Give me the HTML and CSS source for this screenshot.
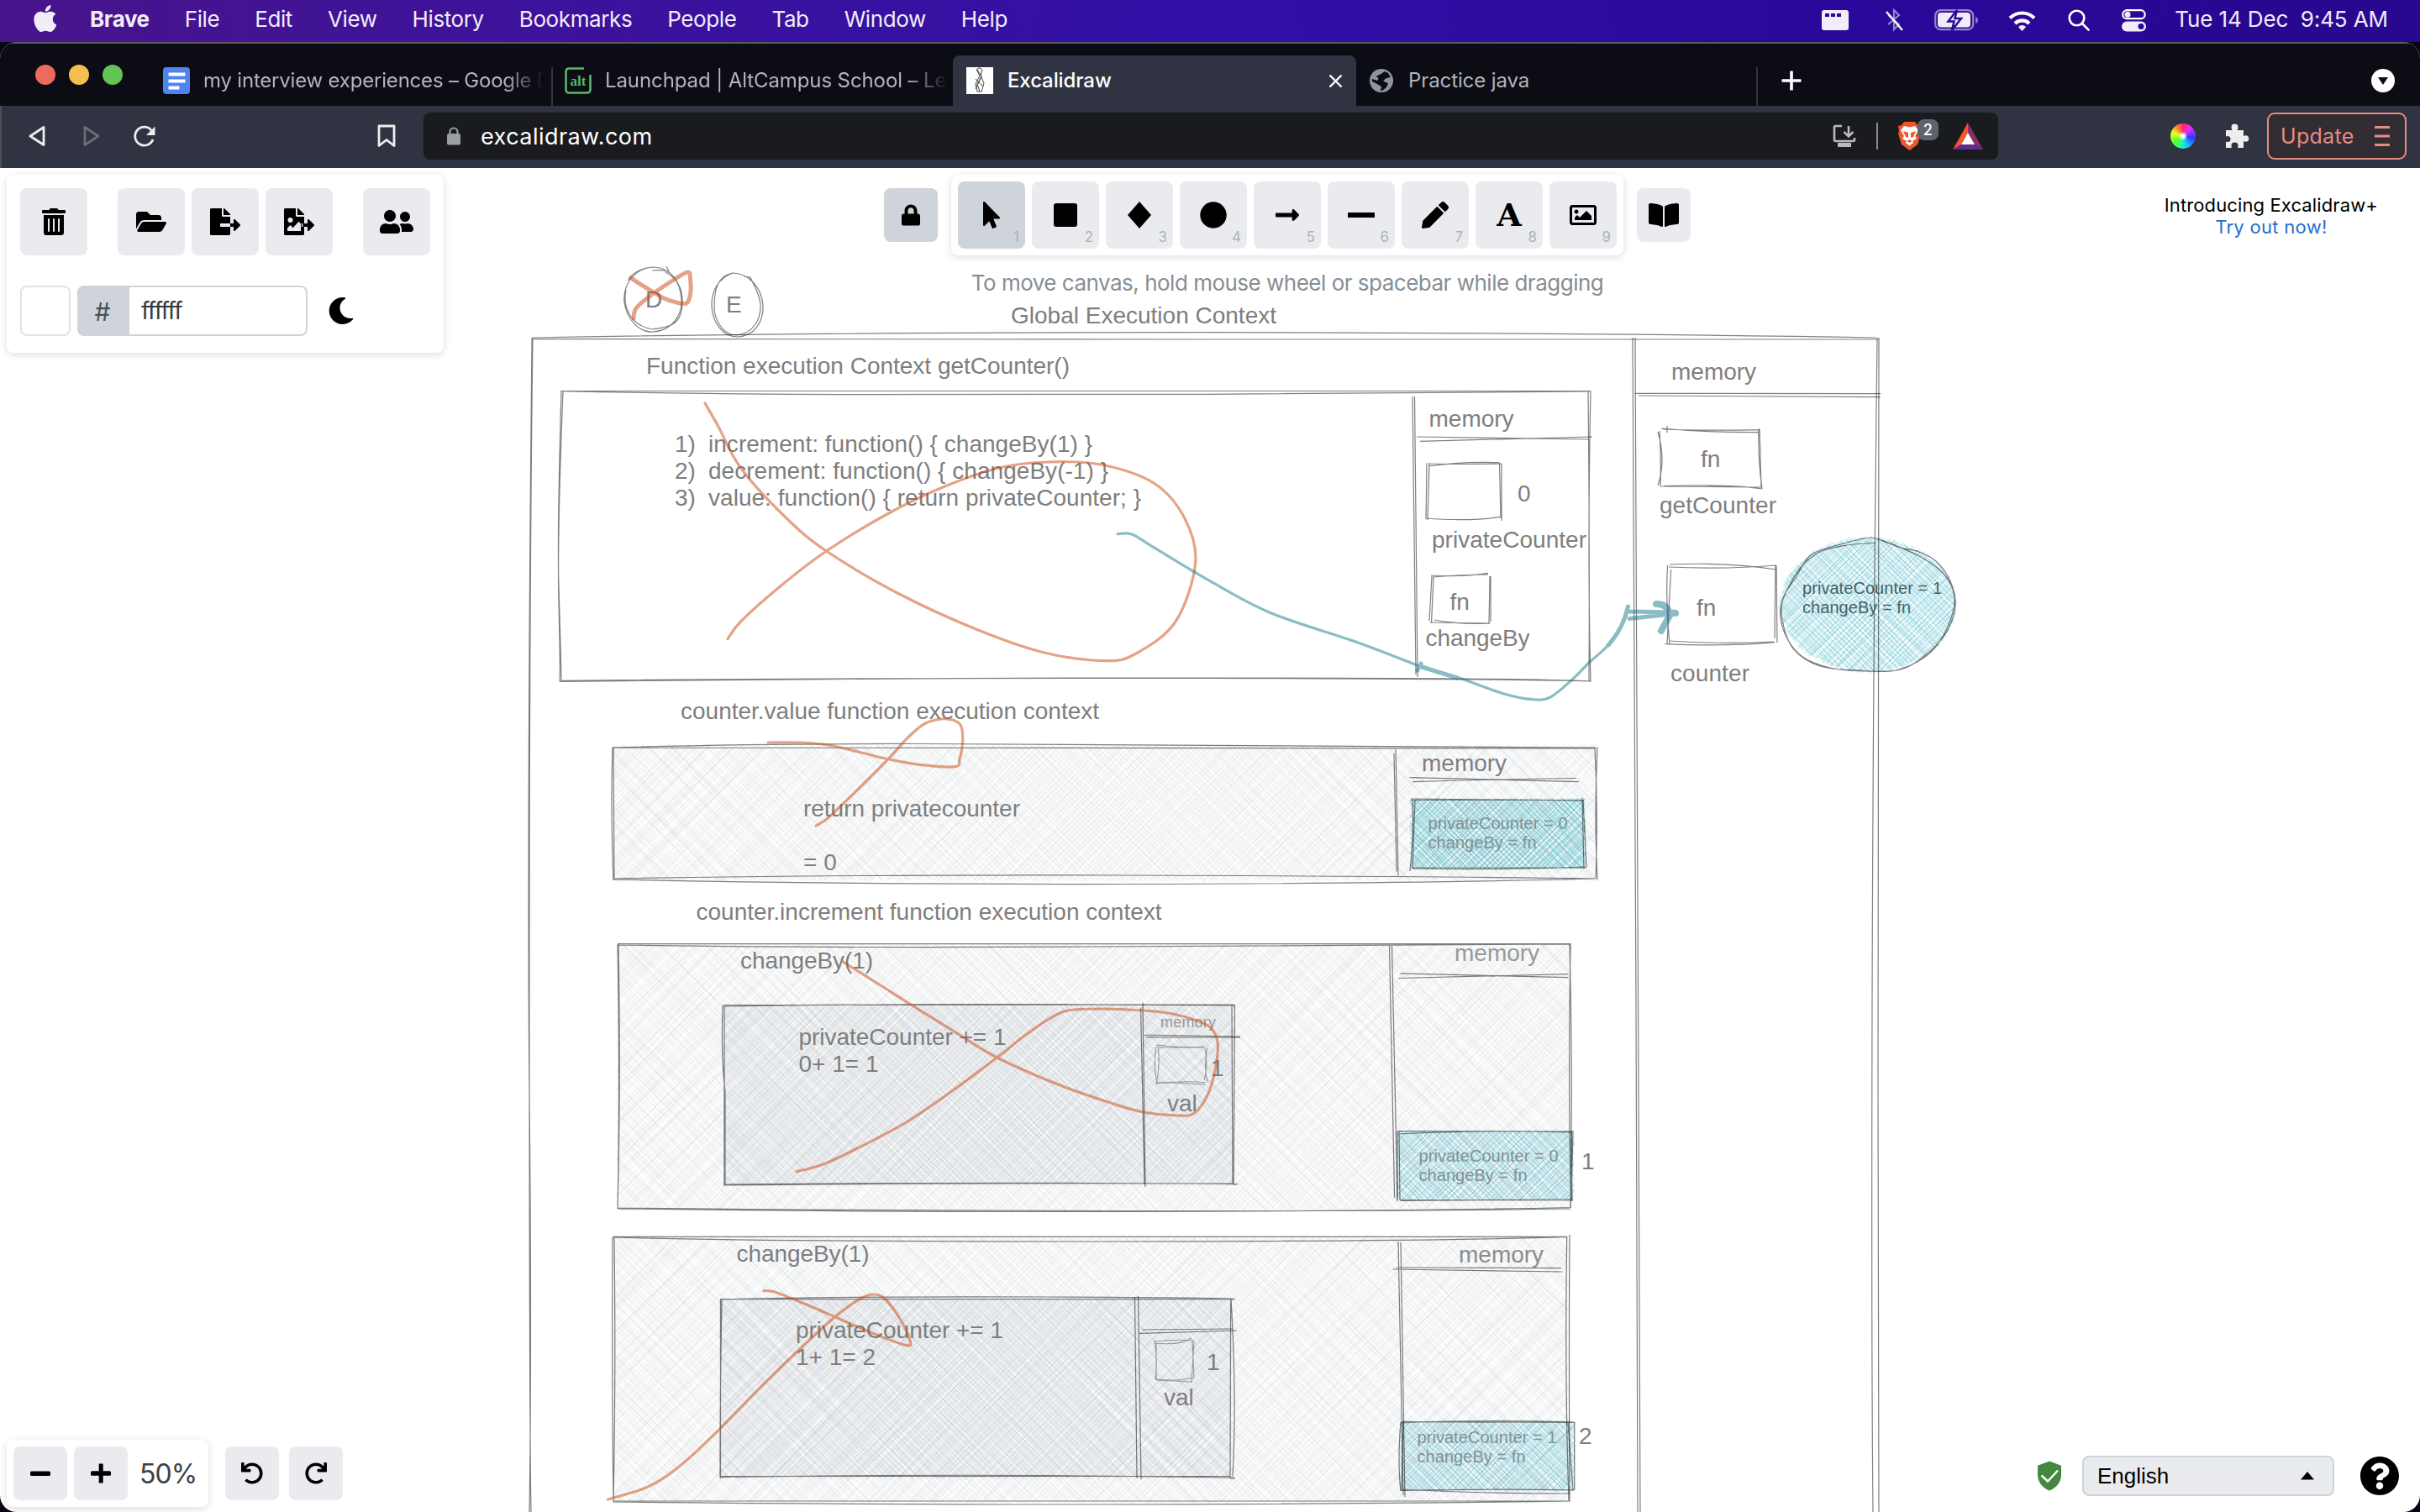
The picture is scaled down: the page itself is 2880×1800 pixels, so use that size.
FILE: index.html
```html
<!DOCTYPE html>
<html lang="en">
<head>
<meta charset="utf-8">
<title>Excalidraw</title>
<link rel="stylesheet" href="styles.css">
</head>
<body>
<header class="menubar">
  <nav class="menus">
    <svg class="apple" viewBox="4 32 368 448" width="27" height="32"><path d="M318.7 268.7c-.2-36.7 16.4-64.4 50-84.8-18.8-26.9-47.2-41.7-84.7-44.6-35.5-2.8-74.3 20.7-88.5 20.7-15 0-49.4-19.7-76.4-19.7C63.3 141.2 4 184.8 4 273.5q0 39.3 14.4 81.2c12.8 36.7 59 126.7 107.2 125.2 25.2-.6 43-17.9 75.8-17.9 31.8 0 48.3 17.9 76.4 17.9 48.6-.7 90.4-82.5 102.6-119.3-65.2-30.7-61.7-90-61.7-91.9zm-56.6-164.2c27.3-32.4 24.8-61.9 24-72.5-24.1 1.4-52 16.4-67.9 34.9-17.5 19.8-27.8 44.3-25.6 71.9 26.1 2 49.9-11.4 69.5-34.3z"/></svg>
    <b>Brave</b><span>File</span><span>Edit</span><span>View</span><span>History</span><span>Bookmarks</span><span>People</span><span>Tab</span><span>Window</span><span>Help</span>
  </nav>
  <div class="status">
    <svg width="32" height="24" viewBox="0 0 32 24"><path fill-rule="evenodd" d="M3 0h26a3 3 0 0 1 3 3v18a3 3 0 0 1-3 3H3a3 3 0 0 1-3-3V3a3 3 0 0 1 3-3zm1 4v4h5V4zm7 0v4h5V4zm7 0v4h5V4z"/></svg>
    <svg class="bt" width="22" height="28" viewBox="0 0 22 28"><path d="M4 8l13 11-6 6V2l6 6L4 19" opacity=".5"/><path d="M2 4l19 22"/></svg>
    <svg class="battery" width="52" height="26" viewBox="0 0 52 26"><rect x="1.2" y="1.2" width="45" height="23" rx="6.500" fill="none" stroke="#fff" stroke-opacity=".5" stroke-width="2.200"/><path d="M49 9v8q3-1 3-4t-3-4z" opacity=".5"/><rect x="4" y="4" width="39" height="17.500" rx="4"/><path d="M27 1L16.500 14.500h7L21 25l11-14h-7.500z" stroke="#2a0b98" stroke-width="2.500"/></svg>
    <svg width="33" height="25" viewBox="0 0 33 25"><g fill="none" stroke="#fff" stroke-width="4.200"><path d="M2 9.500a20.500 20.500 0 0 1 29 0"/><path d="M8 16a12 12 0 0 1 17 0"/></g><path d="M16.500 25l-4.600-5a6.500 6.500 0 0 1 9.200 0z"/></svg>
    <svg width="26" height="26" viewBox="0 0 26 26"><g fill="none" stroke="#fff" stroke-width="2.600" stroke-linecap="round"><circle cx="10.500" cy="10.500" r="8.800"/><path d="M17 17l7.500 7.500"/></g></svg>
    <svg width="29" height="27" viewBox="0 0 29 27"><rect x="1.200" y="1.200" width="26.500" height="10" rx="5" fill="none" stroke="#fff" stroke-width="2.200"/><circle cx="7" cy="6.200" r="3.500"/><path fill-rule="evenodd" d="M6 14.500h17a6 6 0 0 1 0 12H6a6 6 0 0 1 0-12zm17 2.500a3.500 3.500 0 1 0 .01 7 3.500 3.500 0 0 0 0-7z"/></svg>
    <span class="clock">Tue 14 Dec&nbsp; 9:45 AM</span>
  </div>
</header>

<div class="window">
  <div class="tabs">
    <div class="lights"><i class="red"></i><i class="yellow"></i><i class="green"></i></div>
    <div class="tab tab-docs">
      <svg width="32" height="32" viewBox="0 0 32 32"><rect width="32" height="32" rx="4" fill="#4f84f0"/><path fill="#fff" d="M6.500 6.500h20v4h-20zm0 8h20v4h-20zm0 8h13v4h-13z"/></svg>
      <span class="title fade">my interview experiences – Google D</span>
    </div>
    <div class="tab tab-alt">
      <svg width="32" height="32" viewBox="0 0 32 32"><path d="M23 1.500H5A3.500 3.500 0 0 0 1.500 5v22A3.500 3.500 0 0 0 5 30.500h22a3.500 3.500 0 0 0 3.500-3.500V9" fill="none" stroke="#57b96b" stroke-width="2.600"/><text x="16" y="22" text-anchor="middle" font-family="Liberation Serif, serif" font-weight="bold" font-size="17" fill="#57b96b">alt</text></svg>
      <span class="title fade">Launchpad | AltCampus School – Lea</span>
    </div>
    <div class="tab tab-active">
      <svg width="32" height="32" viewBox="0 0 32 32"><rect width="32" height="32" fill="#fff"/><path d="M12 3q4-4 7 0l-2 7 4 9-3 10h-5l-2-9 5-10zM13 3l5 8-5 9 3 9M11 14l9 9M18 11l-7 15" fill="none" stroke="#444" stroke-width="1"/></svg>
      <span class="title">Excalidraw</span>
      <svg class="close" width="17" height="17" viewBox="0 0 17 17"><path d="M1.500 1.500l14 14M15.500 1.500l-14 14"/></svg>
    </div>
    <div class="tab tab-java">
      <svg width="28" height="28" viewBox="0 0 28 28"><circle cx="14" cy="14" r="14" fill="#90949c"/><path fill="#0b0c14" d="M18 3l4 2 3 5-5 1-4 3 3 2 3 1-2 5-5 4-2 0 1-5-5-3-6-3-.5-3 4 1 3 1 1-3-3-2 6-3z"/></svg>
      <span class="title">Practice java</span>
    </div>
    <svg class="newtab" width="26" height="26" viewBox="0 0 26 26"><path d="M13 1.500v23M1.500 13h23"/></svg>
    <svg class="tabsearch" width="28" height="28" viewBox="0 0 28 28"><circle cx="14" cy="14" r="14" fill="#fff"/><path d="M8 10h12l-6 9z" fill="#0b0c14"/></svg>
  </div>

  <div class="toolbar">
    <div class="nav">
      <svg width="20" height="26" viewBox="0 0 20 26"><path d="M18 2.500v21L2 13z"/></svg>
      <svg class="dim" width="20" height="26" viewBox="0 0 20 26"><path d="M2 2.500v21L18 13z"/></svg>
      <svg width="28" height="27" viewBox="0 0 28 27"><path d="M24 17a11 11 0 1 1-1.500-10.500"/><path class="solid" d="M26.500 1.500V12H16z"/></svg>
      <svg class="mark" width="22" height="28" viewBox="0 0 22 28"><path d="M2 2h18v23.500L11 18.500 2 25.500z"/></svg>
    </div>
    <div class="url">
      <svg width="16" height="22" viewBox="0 0 16 22"><path d="M3.500 9V6a4.500 4.500 0 0 1 9 0v3" fill="none" stroke="#9a9da1" stroke-width="2.200"/><rect y="8" width="16" height="13.500" rx="2" fill="#9a9da1"/></svg>
      <span class="addr">excalidraw.com</span>
      <svg class="install" width="28" height="28" viewBox="0 0 28 28"><path d="M11 2H3.500A1.500 1.500 0 0 0 2 3.500v15A1.500 1.500 0 0 0 3.500 20h21a1.500 1.500 0 0 0 1.500-1.500V16M19 2v12m-5.500-5l5.500 5.500L24.500 9" fill="none" stroke="#b9babc" stroke-width="2.600"/><path d="M6 22h16v5H6z" fill="#b9babc"/></svg>
      <i class="sep"></i>
      <div class="shields">
        <svg width="29" height="36" viewBox="0 0 29 36"><path fill="#f0572a" d="M8 1h13l3 4 4 1-1 6 1 3-4 13-9.500 7L5 28 1 15l1-3-1-6 4-1z"/><path fill="#fff" d="M8 6l6.500 1.500L21 6l4 5-4 7 2 3-5 3 1 2-4.500 3.500L10 26l1-2-5-3 2-3-4-7z"/><path fill="#f0572a" d="M7 12l6 2v6l-3-1zM22 12l-6 2v6l3-1zM14.500 22l3 2-3 2-3-2z"/></svg>
        <b class="badge">2</b>
      </div>
      <svg width="36" height="32" viewBox="0 0 36 32"><path fill="#f5522f" d="M18 0v12L10 26l-10 6z"/><path fill="#8e2a64" d="M18 0l18 32-10-6-8-14z"/><path fill="#5c2e91" d="M0 32h36l-10-6H10z"/><path fill="#fff" d="M18 12l8 14H10z"/></svg>
    </div>
    <div class="ext">
      <div class="wheel"></div>
      <svg width="30" height="30" viewBox="0 0 30 30"><path fill="#eee" d="M2 8h7.500q-1-1.500-1-3.500a4 4 0 0 1 8 0Q16.500 6.500 15.500 8H23v7q1-.8 2.500-.8a3.700 3.700 0 0 1 0 7.600q-1.500 0-2.500-.8V29h-7q.5-1 .5-2.500a4 4 0 0 0-8 0Q8.500 28 9 29H2v-7.500q1 .5 2 .5a3.500 3.500 0 0 0 0-7q-1 0-2 .5z"/></svg>
      <div class="update">Update <svg width="20" height="26" viewBox="0 0 20 26"><path d="M1 2.500h18M1 13h18M1 23.500h18"/></svg></div>
    </div>
  </div>

  <main class="app">
    <svg class="canvas" viewBox="0 200 2880 1600" width="2880" height="1600">
      <!-- hachure fills, generated by canvas.js -->
      <g class="h-gray" data-box="730 888 1170 160"></g>
      <g class="h-gray" data-box="736 1124 1133 316"></g>
      <g class="h-gray" data-box="730 1472 1137 316"></g>
      <g class="h-dark" data-box="862 1197 606 213"></g>
      <g class="h-dark" data-box="857 1547 608 212"></g>
      <g class="h-teal strong" data-box="1680 952 206 81"></g>
      <g class="h-teal" data-box="1664 1347 208 81"></g>
      <g class="h-teal" data-box="1667 1693 206 81"></g>
      <g class="h-teal pale" data-round="2223 720 104 79"></g>

      <g class="ink">
        <!-- D and E -->
        <path d="M776 318c-22 2-35 22-33 42 3 20 17 36 34 35 22-1 35-19 34-38-1-22-13-39-34-39-14 1-24 6-30 16M776 322c10-1 18 0 21 3m-4-8l3 6M745 345c-5 24 9 44 32 47 20-3 34-5 35-30 1-20-8-32-20-38"/>
        <path d="M872 325c-17 6-26 22-25 40 1 20 14 36 31 36 20-1 31-18 30-38-2-22-18-38-36-38-18 3-22 20-22 40 0 18 12 34 27 34 18-2 29-17 28-37-1-12-8-22-12-32l-8-1"/>
        <!-- global frame -->
        <path d="M633 402Q1000 395.500 1440 395.700T2233 402M633 403.500L1440 404H2236M633 402Q627 1000 630 1300T630 1800M634 403Q630 700 630 1200T632 1800M2234 402Q2229 800 2228 1200T2229 1800M2236 402Q2235 900 2235 1300T2236 1800"/>
        <path d="M1943 402Q1946 900 1947 1200T1949 1800M1946 402Q1948 900 1950 1300T1952 1800M1945 468.300L2238 468.700M1950 471L2238 472.700"/>
        <!-- getCounter frame -->
        <path d="M667 465.500H1893M667 465.700Q830 469 1000 469.700T1440 469.300L1892 466M668 466Q663 640 665 700T668 811M670 466Q663 640 665 720T666 812M667 811.300Q1060 807 1440 807T1892 811M667 810.300Q1060 806.500 1440 807.500T1893 811M1893 465Q1889 660 1893 812M1890 466Q1892 640 1891 811"/>
        <path d="M1681 472L1685 803M1683.500 472L1687 806M1686 520L1890 523M1690 525.300L1895 520"/>
        <path d="M1700 555Q1740 549 1784 550.700M1701 552Q1740 553 1787 552M1698 551L1697 618M1701 551L1699 619M1784.500 551L1786 617M1787 552L1787 620M1696.500 617Q1750 621 1785 615.300"/>
        <path d="M1703 685Q1740 687 1771 682.300M1705 687Q1740 684 1771 684M1704 686L1701 739M1706 687L1703.500 742M1773 686L1772 743M1774 686L1774 740M1702 741L1773 742M1707 738Q1740 744 1772 742"/>
        <path d="M1977 510Q2030 515 2094 514.700M1979 511Q2030 513 2094 511.700M1984 507V515M1973 514Q1983 548 1973 578M1975 513Q1977 545 1976 579M2093 510Q2092 545 2097 582M2094 511L2096 581M1976 579L2095 580M1980 578.500Q2060 576 2097 582"/>
        <path d="M1987 672Q2055 669 2114 678M1986 675Q2055 678 2114 673M1984.500 673Q1982 720 1987 767M1988.600 678L1984 766M2113 673L2112 760M2114 673L2115 765M1981.600 766.700Q2055 770 2112 764.700M1986 763Q2050 767 2112 764"/>
        <path data-curve="2232,646 2198,649 2168,656 2146,672 2130,696 2119,724 2124,754 2144,781 2178,795 2220,799 2262,797 2290,781 2315,755 2327,722 2321,692 2304,668 2284,657 2262,652 2243,645 2226,640 2194,647 2156,660 2138,686 2122,712 2121,738 2134,772 2166,793 2212,798 2256,798 2296,778 2318,746 2326,712 2314,684 2284,662 2240,643"/>
        <!-- counter.value frame -->
        <path d="M728.600 890Q1300 890.500 1899 891M728.600 890Q900 885 1102 885.500T1899 890M729 890Q726.500 965 730 1048M730 889L731 1046M730 1046Q1000 1041 1340 1042T1898 1046M730 1047Q1000 1053 1340 1052.500T1898 1046M1901 889Q1897 968 1901 1047M1898 890Q1902 968 1899 1046"/>
        <path d="M1661 892L1664 1042.500M1659 897L1662 1037.500M1677.600 925.700Q1780 928 1879 930.600M1681 930.600Q1780 928 1876 926.500"/>
        <path d="M1679 951L1885 953M1678 952.500H1885M1681 951Q1683 990 1678 1037M1684 952L1681 1033M1883 950L1885 1034M1884 952L1888 1033M1681 1033H1887M1680 1034Q1780 1036 1886 1032"/>
        <!-- counter.increment frame -->
        <path d="M735 1123.700L1869 1123.700M735 1125Q1000 1129 1300 1127T1869 1124M735 1124Q738 1290 735 1439M736 1124Q739 1290 735 1438M735 1438.800Q1000 1443 1340 1442.400T1869 1437.500M735 1438Q1000 1441 1340 1441.500T1869 1439M1869 1123Q1866 1280 1869.400 1438M1868 1124Q1872 1280 1869 1437"/>
        <path d="M1653.500 1126L1659.600 1426M1656.500 1126L1663 1428M1666.500 1158.800L1866.500 1163.700M1664.500 1164.500L1866.500 1159.600"/>
        <path d="M1663 1346.500L1872 1347M1664 1350Q1760 1345 1871 1348M1663 1347V1430M1665 1347L1666 1429M1872 1346L1870 1430M1870 1347L1871 1430M1666 1428.600H1872M1667 1429.500Q1780 1428 1872 1428"/>
        <path d="M861 1196.500Q1100 1195 1469 1196M862 1198Q1100 1194 1469 1197M862 1196V1411M860 1197Q858 1260 863 1300V1410M861 1410Q1100 1408 1300 1408.500T1468 1410M861 1411Q1100 1408 1469 1409M1469.500 1196L1468 1411M1466 1196L1467 1410"/>
        <path d="M1360 1193.500L1363 1412.700M1357.600 1199.600L1362 1410M1360 1232L1476 1234M1363.700 1234.700L1476 1235"/>
        <path class="thin" d="M1376 1244Q1405 1248 1434 1246M1378 1247H1433M1376 1246Q1372 1268 1377 1290M1378 1244Q1381 1268 1376 1291M1434 1248Q1438 1270 1433 1286M1437 1247Q1432 1268 1437 1288M1376 1288L1434 1291M1376 1290Q1410 1286 1435 1289"/>
        <!-- second increment frame -->
        <path d="M729.400 1472.300H1865M729.400 1473Q900 1478 1300 1478T1865 1472.300M729 1473Q728 1640 730 1788M731 1473Q733 1640 730 1787M730 1787H1866M730 1788Q1000 1791 1300 1791T1867 1787M1864.700 1472Q1862 1640 1867 1787M1868 1470Q1867 1600 1868 1788"/>
        <path d="M1664 1478L1670 1780M1667 1479L1672 1782M1661.600 1509L1858 1509.700M1657.600 1511L1859.400 1514"/>
        <path d="M1667 1694Q1760 1690 1873 1693M1668 1692.700L1874 1693.300M1667 1693Q1663 1740 1667 1775M1670 1693L1668 1774M1873.700 1693V1774M1866 1693L1872 1774M1666 1774.500Q1780 1772 1873 1774M1667 1773Q1760 1778 1869 1778"/>
        <path d="M857.500 1546.700H1465M857.500 1547Q1000 1543 1250 1544T1465 1547M857.500 1546V1760M859 1547Q857 1650 857 1759M857 1758.500Q1100 1755 1300 1757T1464 1760M857 1757.500H1464M1464.700 1546L1464 1760M1465 1546Q1472 1660 1467 1758"/>
        <path d="M1350.500 1544L1353 1759M1354.500 1543L1358 1761M1359 1583L1467 1582M1356 1587.300L1472 1584"/>
        <path class="thin" d="M1374 1597Q1400 1594 1421 1596M1373 1599Q1405 1602 1418 1593M1374 1596Q1378 1620 1375 1643M1376 1599V1642M1419 1596L1421 1640M1421 1597L1418 1646M1375 1642Q1400 1645 1421 1640M1376 1643L1419 1645"/>
      </g>

      <g class="label">
        <text x="768" y="366" textLength="20">D</text>
        <text x="864" y="372">E</text>
        <text x="1203" y="385" textLength="316">Global Execution Context</text>
        <text x="769" y="445" textLength="504">Function execution Context getCounter()</text>
        <text x="803" y="538">1)</text><text x="843" y="538" textLength="457">increment: function() { changeBy(1) }</text>
        <text x="803" y="570">2)</text><text x="843" y="570" textLength="476">decrement: function() { changeBy(-1) }</text>
        <text x="803" y="602">3)</text><text x="843" y="602" textLength="515">value: function() { return privateCounter; }</text>
        <text x="810" y="856" textLength="498">counter.value function execution context</text>
        <text x="1989" y="452">memory</text>
        <text x="1700.500" y="508">memory</text>
        <text x="1806" y="597">0</text>
        <text x="1704" y="652" textLength="184">privateCounter</text>
        <text x="1725.500" y="726">fn</text>
        <text x="1696.500" y="769" textLength="124">changeBy</text>
        <text x="2024" y="556">fn</text>
        <text x="1975" y="611" textLength="139">getCounter</text>
        <text x="2019" y="733">fn</text>
        <text x="1988" y="811" textLength="94">counter</text>
        <text x="956" y="971.500" textLength="258">return privatecounter</text>
        <text x="956" y="1035.500">= 0</text>
        <text x="828.500" y="1095" textLength="554">counter.increment function execution context</text>
        <text x="881" y="1152.700" textLength="158">changeBy(1)</text>
        <text x="950.500" y="1243.500" textLength="247">privateCounter += 1</text>
        <text x="950.500" y="1275.500" textLength="95">0+ 1= 1</text>
        <text x="1692" y="918">memory</text>
        <text class="light" x="1731" y="1144">memory</text>
        <text x="1441" y="1281">1</text>
        <text x="1389" y="1323">val</text>
        <text x="1882" y="1392">1</text>
        <text x="876.500" y="1501.700" textLength="158">changeBy(1)</text>
        <text x="947" y="1592.700" textLength="247">privateCounter += 1</text>
        <text x="947" y="1624.500" textLength="95">1+ 1= 2</text>
        <text x="1436" y="1630.700">1</text>
        <text x="1385" y="1672.700">val</text>
        <text class="light2" x="1736" y="1502.700">memory</text>
        <text x="1879" y="1718.500">2</text>
      </g>
      <g class="label small">
        <text class="deep" x="2145" y="706.700" textLength="166">privateCounter = 1</text>
        <text class="deep" x="2145" y="729.500" textLength="129">changeBy = fn</text>
        <text x="1699.500" y="987" textLength="166">privateCounter = 0</text>
        <text x="1699.500" y="1010" textLength="129">changeBy = fn</text>
        <text x="1688.500" y="1382.500" textLength="166">privateCounter = 0</text>
        <text x="1688.500" y="1405.500" textLength="129">changeBy = fn</text>
        <text x="1686.500" y="1718" textLength="166">privateCounter = 1</text>
        <text x="1686.500" y="1741" textLength="129">changeBy = fn</text>
        <text class="tiny" x="1381" y="1223" textLength="66">memory</text>
      </g>

      <g class="orange">
        <path class="bold" data-curve="751,331 768,342 790,355 805,360 817,361 821.6,350 821.6,333 818.6,324 802,333 774,352 757,367 754,379"/>
        <path data-curve="839,480 855,508 881.5,557 934,615 983.5,656 1070,707 1164,750 1242,776.7 1315,786.7 1352,778 1399,740 1422.7,670 1409.7,616.7 1373,575 1310,553 1247.5,550 1190,556.7 1122,580 1054,613 983.5,656 928.5,698 881.5,740 866,760.7"/>
        <path data-curve="914,884 954.5,884 986,887 1021.4,895 1057,903.7 1097,910.6 1137,912.7 1142,903.7 1145.5,885 1144,865 1135,857.6 1119.6,856 1099.6,862 1079.5,879 1057,903.7 1030,931 999,961 984,975 971,983"/>
        <path data-curve="1003.6,1145 1048,1173 1084,1196 1142,1232 1186.6,1259 1258,1290.6 1325,1314 1360.7,1324 1401,1328 1421.6,1325 1438,1301.6 1447,1269 1449,1240 1440,1223 1421.6,1214 1393,1206.5 1360.7,1203 1311.6,1201 1271,1203 1249,1212.7 1218,1234 1186.6,1259 1137.5,1295.5 1079.5,1335.5 1012.5,1371 977,1387 948,1394.7"/>
        <path data-curve="909,1536.7 921,1537.7 950,1549 993.7,1567.7 1035,1585.7 1079,1601.7 1082,1593 1071,1570 1053,1546 1039.6,1541 1024,1546 993.7,1567.7 955,1603 910,1646.7 856.6,1701 821,1735 794,1756.7 767,1771.7 723.6,1785"/>
      </g>
      <g class="teal">
        <path data-curve="1330,635.7 1347,636 1373,651.7 1440,691.7 1513,730 1616,765 1689,793"/>
        <path data-curve="1689,794 1733.4,806 1790,826 1824,832.7 1845,830 1870,810 1892,788 1911,771 1927,750 1937,723"/>
        <path class="bold" d="M1691 790L1687 798M1689 793L1734 807M1914 768Q1932 748 1937.500 722M1938 728L1992 729M1939 736.500L1980 732"/>
        <path class="head" d="M1971 719Q1984 719 1986 729L1994 730M1988 731Q1983 740 1977 751"/>
      </g>
    </svg>

    <div class="topbar">
      <section class="island panel">
        <div class="actions">
          <button class="btn"><svg viewBox="0 0 448 512" width="28" height="32"><path d="M32 464a48 48 0 0 0 48 48h288a48 48 0 0 0 48-48V128H32zm272-256a16 16 0 0 1 32 0v224a16 16 0 0 1-32 0zm-96 0a16 16 0 0 1 32 0v224a16 16 0 0 1-32 0zm-96 0a16 16 0 0 1 32 0v224a16 16 0 0 1-32 0zM432 32H312l-9.400-18.700A24 24 0 0 0 281.100 0H166.800a23.720 23.720 0 0 0-21.400 13.300L136 32H16A16 16 0 0 0 0 48v32a16 16 0 0 0 16 16h416a16 16 0 0 0 16-16V48a16 16 0 0 0-16-16z"/></svg></button>
          <div class="files">
            <button class="btn"><svg viewBox="0 0 576 512" width="36" height="32"><path d="M572.694 292.093L500.270 416.248A63.997 63.997 0 0 1 444.989 448H45.025c-18.523 0-30.064-20.093-20.731-36.093l72.424-124.155A64 64 0 0 1 152 256h399.964c18.523 0 30.064 20.093 20.730 36.093zM152 224h328v-48c0-26.510-21.490-48-48-48H272l-64-64H48C21.490 64 0 85.490 0 112v278.046l69.077-118.418C86.214 242.250 117.989 224 152 224z"/></svg></button>
            <button class="btn"><svg viewBox="0 0 576 512" width="36" height="32"><path d="M384 121.900c0-6.300-2.500-12.400-7-16.900L279.100 7c-4.500-4.500-10.600-7-17-7H256v128h128zM571 308l-95.700-96.400c-10.100-10.100-27.400-3-27.400 11.300V288h-64v64h64v65.200c0 14.300 17.300 21.400 27.400 11.300L571 332c6.600-6.600 6.600-17.400 0-24zm-379 28v-32c0-8.800 7.200-16 16-16h176V160H248c-13.200 0-24-10.800-24-24V0H24C10.700 0 0 10.700 0 24v464c0 13.300 10.700 24 24 24h336c13.300 0 24-10.700 24-24V352H208c-8.800 0-16-7.200-16-16z"/></svg></button>
            <button class="btn"><svg viewBox="0 0 576 512" width="36" height="32"><path fill-rule="evenodd" d="M384 121.900c0-6.300-2.500-12.400-7-16.900L279.100 7c-4.500-4.500-10.600-7-17-7H256v128h128zM571 308l-95.700-96.400c-10.100-10.100-27.400-3-27.400 11.300V288h-90v64h90v65.200c0 14.300 17.300 21.400 27.400 11.300L571 332c6.600-6.600 6.600-17.400 0-24zM384 288V160H248c-13.200 0-24-10.800-24-24V0H24C10.700 0 0 10.700 0 24v464c0 13.300 10.700 24 24 24h336c13.300 0 24-10.700 24-24V352h-50v-64zM120 176a48 48 0 1 1 0 96 48 48 0 0 1 0-96zM64 432v-56l56-56 50 50 110-120 40 44v138z"/></svg></button>
          </div>
          <button class="btn"><svg viewBox="0 0 640 512" width="40" height="32"><path d="M192 256c61.900 0 112-50.100 112-112S253.900 32 192 32 80 82.100 80 144s50.100 112 112 112zm76.800 32h-8.300c-20.800 10-43.900 16-68.500 16s-47.600-6-68.500-16h-8.300C51.600 288 0 339.600 0 403.200V432c0 26.500 21.500 48 48 48h288c26.500 0 48-21.500 48-48v-28.800c0-63.600-51.600-115.200-115.200-115.200zM480 256c53 0 96-43 96-96s-43-96-96-96-96 43-96 96 43 96 96 96zm48 32h-3.800c-13.900 4.800-28.600 8-44.200 8s-30.300-3.200-44.200-8H432c-20.400 0-39.200 5.900-55.700 15.400 24.400 26.300 39.700 61.200 39.700 99.800v38.400c0 2.200-.5 4.300-.6 6.400H592c26.500 0 48-21.500 48-48 0-61.900-50.100-112-112-112z"/></svg></button>
        </div>
        <div class="colors">
          <span class="swatch"></span>
          <div class="hex"><span class="hash">#</span><span class="value">ffffff</span></div>
          <svg class="moon" viewBox="0 0 512 512" width="32" height="32"><path d="M283.211 512c78.962 0 151.079-35.925 198.857-94.792 7.068-8.708-.639-21.430-11.562-19.350-124.203 23.654-238.262-71.576-238.262-196.954 0-72.222 38.662-138.635 101.498-174.394 9.686-5.512 7.250-20.197-3.756-22.230A258.156 258.156 0 0 0 283.211 0c-141.309 0-256 114.511-256 256 0 141.309 114.511 256 256 256z"/></svg>
        </div>
      </section>

      <div class="center">
        <div class="tools">
          <button class="btn sm on"><svg viewBox="0 0 448 512" width="22" height="26"><path d="M400 224h-24v-72C376 68.200 307.800 0 224 0S72 68.200 72 152v72H48c-26.500 0-48 21.500-48 48v192c0 26.500 21.500 48 48 48h352c26.500 0 48-21.500 48-48V272c0-26.500-21.500-48-48-48zm-104 0H152v-72c0-39.700 32.300-72 72-72s72 32.300 72 72v72z"/></svg></button>
          <div class="island shapes">
            <button class="btn on"><svg viewBox="0 0 320 512" width="20" height="32"><path d="M302.189 329.126H196.105l55.831 135.993c3.889 9.428-.555 19.999-9.444 23.999l-49.165 21.427c-9.165 4-19.443-.571-23.332-9.714l-53.053-129.136-86.664 89.138C18.729 472.710 0 463.554 0 447.977V18.299C0 1.899 19.921-6.096 30.277 5.443l284.412 292.542c11.472 11.179 3.007 31.141-12.500 31.141z"/></svg><i>1</i></button>
            <button class="btn"><svg viewBox="0 0 28 28" width="28" height="28"><rect width="28" height="28" rx="3"/></svg><i>2</i></button>
            <button class="btn"><svg viewBox="0 0 28 32" width="28" height="32"><path d="M14 0l14 16-14 16L0 16z"/></svg><i>3</i></button>
            <button class="btn"><svg viewBox="0 0 32 32" width="32" height="32"><circle cx="16" cy="16" r="15.700"/></svg><i>4</i></button>
            <button class="btn"><svg viewBox="0 0 448 512" width="28" height="32"><path d="M313.941 216H12c-6.627 0-12 5.373-12 12v56c0 6.627 5.373 12 12 12h301.941v46.059c0 21.382 25.851 32.090 40.971 16.971l86.059-86.059c9.373-9.373 9.373-24.569 0-33.941l-86.059-86.059c-15.119-15.119-40.971-4.411-40.971 16.971V216z"/></svg><i>5</i></button>
            <button class="btn"><svg viewBox="0 0 32 6" width="32" height="6"><rect width="32" height="6" rx=".5"/></svg><i>6</i></button>
            <button class="btn"><svg viewBox="0 0 512 512" width="32" height="32"><path d="M497.900 142.100l-46.100 46.100c-4.700 4.700-12.300 4.700-17 0l-111-111c-4.700-4.700-4.700-12.300 0-17l46.100-46.100c18.700-18.700 49.100-18.700 67.900 0l60.100 60.100c18.800 18.700 18.800 49.100 0 67.900zM284.200 99.800L21.600 362.400.4 483.900c-2.900 16.400 11.400 30.600 27.800 27.800l121.500-21.300 262.600-262.600c4.700-4.700 4.700-12.300 0-17l-111-111c-4.800-4.700-12.400-4.700-17.100 0z"/></svg><i>7</i></button>
            <button class="btn"><b class="letter">A</b><i>8</i></button>
            <button class="btn"><svg viewBox="0 0 512 512" width="32" height="32"><path d="M464 64H48C21.490 64 0 85.490 0 112v288c0 26.510 21.490 48 48 48h416c26.510 0 48-21.490 48-48V112c0-26.510-21.490-48-48-48zm-6 336H54a6 6 0 0 1-6-6V118a6 6 0 0 1 6-6h404a6 6 0 0 1 6 6v276a6 6 0 0 1-6 6zM128 152c-22.091 0-40 17.909-40 40s17.909 40 40 40 40-17.909 40-40-17.909-40-40-40zM96 352h320v-80l-87.515-87.515c-4.686-4.686-12.284-4.686-16.971 0L192 304l-39.515-39.515c-4.686-4.686-12.284-4.686-16.971 0L96 304v48z"/></svg><i>9</i></button>
          </div>
          <button class="btn sm"><svg viewBox="0 0 576 512" width="36" height="32"><path d="M542.220 32.050c-54.800 3.110-163.720 14.430-230.960 55.590-4.640 2.840-7.270 7.890-7.270 13.170v363.870c0 11.550 12.630 18.850 23.280 13.490 69.180-34.820 169.230-44.320 218.700-46.920 16.890-.89 30.020-14.430 30.020-30.660V62.750c.01-17.710-15.350-31.740-33.770-30.700zM264.730 87.640C197.500 46.480 88.580 35.170 33.780 32.050 15.360 31.010 0 45.040 0 62.750V400.600c0 16.240 13.130 29.780 30.020 30.660 49.490 2.600 149.590 12.110 218.770 46.950 10.620 5.350 23.210-1.940 23.210-13.460V100.630c0-5.290-2.620-10.140-7.270-12.990z"/></svg></button>
        </div>
        <p class="hint">To move canvas, hold mouse wheel or spacebar while dragging</p>
      </div>

      <div class="promo">Introducing Excalidraw+<br><a>Try out now!</a></div>
    </div>

    <footer class="bottombar">
      <div class="island zoom">
        <button class="btn sm"><svg viewBox="0 0 24 24" width="24" height="24"><rect y="9.500" width="24" height="5.500" rx="1.500"/></svg></button>
        <button class="btn sm"><svg viewBox="0 0 24 24" width="24" height="24"><path d="M9.700.5h5v8.700H22.500a1.500 1.500 0 0 1 1.500 1.500v2.600a1.500 1.500 0 0 1-1.500 1.500h-7.800v8.700h-5v-8.700H1.500A1.500 1.500 0 0 1 0 13.300v-2.600a1.500 1.500 0 0 1 1.500-1.500h8.200z"/></svg></button>
        <span class="pct">50%</span>
      </div>
      <div class="history">
        <button class="btn sm"><svg viewBox="0 0 512 512" width="26" height="26"><path d="M212.333 224.333H12c-6.627 0-12-5.373-12-12V12C0 5.373 5.373 0 12 0h48c6.627 0 12 5.373 12 12v78.112C117.773 39.279 184.260 7.470 258.175 8.007c136.906.994 246.448 111.623 246.157 248.532C504.041 393.258 393.120 504 256.333 504c-64.089 0-122.496-24.313-166.510-64.215-5.099-4.622-5.334-12.554-.467-17.420l33.967-33.967c4.474-4.474 11.662-4.717 16.401-.525C170.760 415.336 211.580 432 256.333 432c97.268 0 176-78.716 176-176 0-97.267-78.716-176-176-176-58.496 0-110.280 28.476-142.274 72.333h98.274c6.627 0 12 5.373 12 12v48c0 6.627-5.373 12-12 12z"/></svg></button>
        <button class="btn sm"><svg class="flip" viewBox="0 0 512 512" width="26" height="26"><path d="M212.333 224.333H12c-6.627 0-12-5.373-12-12V12C0 5.373 5.373 0 12 0h48c6.627 0 12 5.373 12 12v78.112C117.773 39.279 184.260 7.470 258.175 8.007c136.906.994 246.448 111.623 246.157 248.532C504.041 393.258 393.120 504 256.333 504c-64.089 0-122.496-24.313-166.510-64.215-5.099-4.622-5.334-12.554-.467-17.420l33.967-33.967c4.474-4.474 11.662-4.717 16.401-.525C170.760 415.336 211.580 432 256.333 432c97.268 0 176-78.716 176-176 0-97.267-78.716-176-176-176-58.496 0-110.280 28.476-142.274 72.333h98.274c6.627 0 12 5.373 12 12v48c0 6.627-5.373 12-12 12z"/></svg></button>
      </div>
      <div class="meta">
        <svg width="30" height="36" viewBox="0 0 30 36"><path fill="#44883f" d="M15 .5l14 5.300V17c0 8.500-6 15.500-14 18.500C7 32.500 1 25.500 1 17V5.800z"/><path d="M5.500 17.500l7.500 7L25 11.500" fill="none" stroke="#fff" stroke-width="2.400"/></svg>
        <div class="lang">English <svg width="16" height="10" viewBox="0 0 16 10"><path d="M8 0l8 9.500H0z"/></svg></div>
        <svg class="help" viewBox="8 8 496 496" width="46" height="46"><path d="M504 256c0 136.997-111.043 248-248 248S8 392.997 8 256C8 119.083 119.043 8 256 8s248 111.083 248 248zM262.655 90c-54.497 0-89.255 22.957-116.549 63.758-3.536 5.286-2.353 12.415 2.715 16.258l34.699 26.310c5.205 3.947 12.621 3.008 16.665-2.122 17.864-22.658 30.113-35.797 57.303-35.797 20.429 0 45.698 13.148 45.698 32.958 0 14.976-12.363 22.667-32.534 33.976C247.128 238.528 216 254.941 216 296v4c0 6.627 5.373 12 12 12h56c6.627 0 12-5.373 12-12v-1.333c0-28.462 83.186-29.647 83.186-106.667 0-58.002-60.165-102-116.531-102zM256 338c-25.365 0-46 20.635-46 46 0 25.364 20.635 46 46 46s46-20.636 46-46c0-25.365-20.635-46-46-46z"/></svg>
      </div>
    </footer>
  </main>
</div>
<script src="canvas.js"></script>
</body>
</html>
```
FILE: styles.css
```css
* { box-sizing: border-box; }
html, body { margin: 0; height: 1800px; }
body {
  width: 2880px;
  overflow: hidden;
  display: flex;
  flex-direction: column;
  background: #0a0414;
  font-family: Inter, "Liberation Sans", sans-serif;
}
svg { display: block; flex: none; }

/* system menu bar */
.menubar {
  height: 50px;
  flex: none;
  padding: 0 38px 0 40px;
  display: flex;
  justify-content: space-between;
  align-items: flex-start;
  color: #f1ecf8;
  font-size: 26px;
  line-height: 46px;
  letter-spacing: -.4px;
  background: linear-gradient(90deg, #47158b 0, #3d129c 22%, #3110a6 50%, #29099a 75%, #28088e 100%);
}
.menubar svg { fill: #f1ecf8; }
.menus { display: flex; gap: 42px; align-items: center; height: 46px; }
.menus b { font-weight: 700; }
.apple { margin: -3px -2px 0 0; }
.status { display: flex; align-items: center; height: 48px; }
.status svg { margin-right: 38px; }
.status svg.bt { fill: none; stroke: #fff; stroke-width: 2.2; margin: 0 37px 0 5px; }
.status svg.battery { margin-right: 36px; }
.status .clock { white-space: pre; line-height: 44px; margin: -3px 0 0 -4px; letter-spacing: -.1px; }

/* browser window */
.window {
  flex: 1;
  display: flex;
  flex-direction: column;
  border-radius: 20px;
  overflow: hidden;
  background: #fff;
}
.tabs {
  height: 76px;
  flex: none;
  display: flex;
  align-items: flex-end;
  background: #0b0c14;
  border-top: 2px solid #5a5a60;
  font-size: 24px;
  color: #b4b5b9;
}
.lights { width: 182px; height: 74px; display: flex; gap: 16px; padding: 25px 0 0 42px; }
.lights i { width: 24px; height: 24px; border-radius: 50%; }
.red { background: #ed6a5e; }
.yellow { background: #f5bf4f; }
.green { background: #61c454; }
.tab { height: 60px; display: flex; align-items: center; white-space: nowrap; }
.title { line-height: 30px; margin: -1px 0 0 16px; letter-spacing: -.1px; }
.fade {
  flex: 1;
  overflow: hidden;
  -webkit-mask-image: linear-gradient(90deg, #000 88%, transparent 100%);
  mask-image: linear-gradient(90deg, #000 88%, transparent 100%);
}
.tab-docs, .tab-alt, .tab-java { height: 46px; padding-bottom: 14px; }
.tab-docs { width: 476px; padding-left: 12px; padding-right: 8px; border-right: 2px solid #33343c; }
.tab-docs .title { letter-spacing: -.2px; }
.tab-alt { width: 476px; padding-left: 14px; padding-right: 6px; }
.tab-active {
  width: 480px;
  padding: 0 16px 0 16px;
  background: #303341;
  border-radius: 8px 8px 0 0;
  color: #fff;
}
.tab-active .title { font-weight: 500; margin-left: 17px; }
.close { margin-left: auto; stroke: #fff; stroke-width: 2.4; }
.tab-java { width: 478px; padding-left: 16px; border-right: 2px solid #33343c; }
.tab-java .title { margin-left: 18px; }
.newtab { stroke: #fff; stroke-width: 3.6; margin: 0 0 17px 27px; }
.tabsearch { margin: 0 30px 16px auto; }

.toolbar {
  height: 74px;
  flex: none;
  display: flex;
  align-items: center;
  padding: 0 16px 2px 0;
  background: #303341;
  border-left: 2px solid #4b4d59;
}
.nav { width: 502px; display: flex; align-items: center; padding-left: 32px; }
.nav svg { fill: none; stroke: #eee; stroke-width: 2.8; stroke-linejoin: round; }
.nav .dim { margin: 0 39px 0 45px; stroke: #6b6d78; }
.nav .solid { fill: #eee; stroke: none; }
.nav .mark { margin-left: 263px; }
.url {
  width: 1874px;
  height: 56px;
  display: flex;
  align-items: center;
  padding: 0 18px 0 28px;
  border-radius: 8px;
  background: #1a1b1f;
  color: #fff;
  font-size: 27px;
  letter-spacing: .45px;
}
.addr { margin: 0 0 0 24px; }
.install { margin-left: auto; }
.sep { width: 2px; height: 32px; margin: 0 23px 0 24px; background: #8b8c90; }
.shields { position: relative; width: 66px; }
.badge {
  position: absolute;
  left: 24px;
  top: -2px;
  width: 25px;
  height: 25px;
  border-radius: 8px;
  background: #5f6370;
  font-size: 18px;
  font-weight: 500;
  line-height: 25px;
  text-align: center;
}
.ext { flex: 1; display: flex; align-items: center; padding-left: 205px; }
.wheel {
  width: 30px;
  height: 30px;
  margin-right: 34px;
  border-radius: 50%;
  background:
    radial-gradient(circle, #fff 0 8%, transparent 25%),
    conic-gradient(#ff2b6b, #e02bff 12%, #2b3bff 28%, #17c8ff 44%, #2bff8a 55%, #5cff2b 66%, #e8ff2b 80%, #ff8a2b 90%, #ff2b6b);
}
.update {
  width: 166px;
  height: 56px;
  margin-left: auto;
  display: flex;
  align-items: center;
  justify-content: space-between;
  padding: 0 17px 0 14px;
  border: 2px solid #e88b82;
  border-radius: 9px;
  background: #322c33;
  color: #e88b82;
  font-size: 25px;
  letter-spacing: .3px;
}
.update svg { stroke: #e88b82; stroke-width: 3; }

/* application */
.app {
  position: relative;
  flex: 1;
  display: flex;
  flex-direction: column;
  justify-content: space-between;
}
.canvas { position: absolute; left: 0; top: 0; }
.ink { fill: none; stroke: #000; stroke-opacity: .5; stroke-width: 1.2; }
.ink .thin { stroke-opacity: .35; stroke-width: 1.1; }
.label { fill: #7e7e7e; font: 28px "Liberation Sans", Arial, sans-serif; }
.label.small { font-size: 20px; fill: #7f9296; }
.label .deep { fill: #45626a; }
.label .light { fill: #999; }
.label .light2 { fill: #8c8c8c; }
.label .tiny { font-size: 18px; fill: #999; }
.orange path, .teal path { fill: none; stroke-width: 3.2; stroke-linecap: round; stroke-linejoin: round; }
.orange path { stroke: #c9470f; stroke-opacity: .5; }
.teal { opacity: .47; }
.teal path { stroke: #0b7285; }
.orange .bold, .teal .bold { stroke-width: 5; }
.teal .head { stroke-width: 8; }
.h-gray path { stroke: #ced4da; stroke-opacity: .19; stroke-width: 1; fill: none; }
.h-dark path { stroke: #b9c1c9; stroke-opacity: .12; stroke-width: 1.1; fill: none; }
.h-teal path { stroke: #15a3b8; stroke-opacity: .18; stroke-width: 1; fill: none; }
.h-teal.strong path { stroke-opacity: .25; }
.h-teal.pale path { stroke-opacity: .19; }

.topbar, .bottombar { position: relative; display: flex; align-items: flex-start; }
.topbar { padding: 8px 50px 0 8px; }
.island { background: #fff; border-radius: 8px; box-shadow: 0 2px 10px rgba(0, 0, 0, .14); }
.btn {
  position: relative;
  width: 80px;
  height: 80px;
  padding: 0;
  border: 0;
  border-radius: 8px;
  background: #eaebef;
  display: flex;
  align-items: center;
  justify-content: center;
}
.btn.sm { width: 64px; height: 64px; }
.btn.on { background: #ced4da; }
.btn i {
  position: absolute;
  right: 7px;
  bottom: 5px;
  font: 17px/17px Inter, sans-serif;
  color: #adb2ba;
}
.panel { width: 520px; height: 212px; padding: 16px; display: flex; flex-direction: column; gap: 36px; }
.actions { display: flex; gap: 36px; }
.files { display: flex; gap: 8px; }
.colors { display: flex; align-items: center; }
.swatch { width: 60px; height: 60px; border: 2px solid #dee2e6; border-radius: 8px; margin-right: 8px; }
.hex {
  width: 274px;
  height: 60px;
  display: flex;
  align-items: center;
  border: 2px solid #ced4da;
  border-radius: 8px;
  font-size: 30px;
  color: #495057;
}
.hash { width: 60px; align-self: stretch; background: #ced4da; text-align: center; font-size: 30px; line-height: 58px; padding-right: 4px; }
.value { margin-left: 14px; color: #343a40; font-size: 28px; line-height: 56px; letter-spacing: -1.4px; font-feature-settings: "calt" 0; }
.moon { margin-left: 24px; }
.center { margin-left: 524px; width: 960px; }
.tools { display: flex; align-items: center; justify-content: space-between; }
.shapes { display: flex; gap: 8px; padding: 8px; }
.letter { font: bold 38px/38px "DejaVu Serif", serif; }
.hint { margin: 17px 0 0; text-align: center; font-size: 26px; line-height: 32px; color: #868e96; letter-spacing: -.5px; }
.promo { margin: 23px 0 0 auto; text-align: center; font-size: 22px; line-height: 26px; letter-spacing: .12px; }
.promo a { color: #1f6fd0; letter-spacing: .3px; }

.bottombar { align-items: center; height: 86px; padding: 0 25px 6px 8px; }
.zoom { width: 240px; height: 80px; padding: 8px; display: flex; align-items: center; gap: 8px; }
.pct { margin: 1px 0 0 6px; font-size: 32px; letter-spacing: -1px; color: #3b4148; }
.history { display: flex; gap: 12px; margin-left: 20px; }
.flip { transform: scaleX(-1); }
.meta { margin-left: auto; display: flex; align-items: center; padding-top: 6px; }
.lang {
  width: 300px;
  height: 48px;
  margin: 0 31px 0 24px;
  display: flex;
  align-items: center;
  justify-content: space-between;
  padding: 0 22px 0 16px;
  border: 2px solid #ced4da;
  border-radius: 8px;
  background: #eaebef;
  font: 26px "Liberation Sans", Arial, sans-serif;
}
```
FILE: canvas.js
```js
// Seeded generator so the sketchy strokes are stable between loads.
let seed = 7;
const rnd = () => (seed = (seed * 16807) % 2147483647) / 2147483647;
const NS = 'http://www.w3.org/2000/svg';

// Fill a box or an ellipse with two crossing families of uneven strokes.
function hatch(g, cx, cy, rx, ry, round) {
  for (const angle of [-45, 45]) {
    for (let pass = 0; pass < 4; pass++) {
      let d = '';
      const reach = rx + ry;
      for (let o = -reach; o < reach; o += 4.6) {
        const a = (angle + (rnd() - 0.5) * 3) * Math.PI / 180;
        const dx = Math.cos(a), dy = Math.sin(a);
        const off = o + (rnd() - 0.5) * 3;
        const px = -Math.sin(angle * Math.PI / 180) * off, py = Math.cos(angle * Math.PI / 180) * off;
        let t0, t1;
        if (round) {
          const A = dx * dx / rx / rx + dy * dy / ry / ry;
          const B = 2 * (px * dx / rx / rx + py * dy / ry / ry);
          const C = px * px / rx / rx + py * py / ry / ry - 1;
          const q = B * B - 4 * A * C;
          if (q <= 0) continue;
          t0 = (-B - Math.sqrt(q)) / 2 / A;
          t1 = (-B + Math.sqrt(q)) / 2 / A;
        } else {
          const xs = [(-rx - px) / dx, (rx - px) / dx].sort((m, n) => m - n);
          const ys = [(-ry - py) / dy, (ry - py) / dy].sort((m, n) => m - n);
          t0 = Math.max(xs[0], ys[0]);
          t1 = Math.min(xs[1], ys[1]);
          if (t0 >= t1) continue;
        }
        t0 += (rnd() - 0.6) * 6;
        t1 += (rnd() - 0.4) * 6;
        d += `M${(cx + px + dx * t0).toFixed(1)} ${(cy + py + dy * t0).toFixed(1)}L${(cx + px + dx * t1).toFixed(1)} ${(cy + py + dy * t1).toFixed(1)}`;
      }
      const p = document.createElementNS(NS, 'path');
      p.setAttribute('d', d);
      g.appendChild(p);
    }
  }
}

document.querySelectorAll('[data-box]').forEach(g => {
  const [x, y, w, h] = g.dataset.box.split(' ').map(Number);
  hatch(g, x + w / 2, y + h / 2, w / 2, h / 2, false);
});
document.querySelectorAll('[data-round]').forEach(g => {
  const [x, y, rx, ry] = g.dataset.round.split(' ').map(Number);
  hatch(g, x, y, rx, ry, true);
});

// Smooth freehand curves through their recorded points.
document.querySelectorAll('[data-curve]').forEach(path => {
  const p = path.dataset.curve.split(' ').map(s => s.split(',').map(Number));
  let d = `M${p[0]}`;
  for (let i = 0; i < p.length - 1; i++) {
    const a = p[i - 1] || p[i], b = p[i], c = p[i + 1], e = p[i + 2] || c;
    d += `C${b[0] + (c[0] - a[0]) / 6},${b[1] + (c[1] - a[1]) / 6} ${c[0] - (e[0] - b[0]) / 6},${c[1] - (e[1] - b[1]) / 6} ${c}`;
  }
  path.setAttribute('d', d);
});
```
